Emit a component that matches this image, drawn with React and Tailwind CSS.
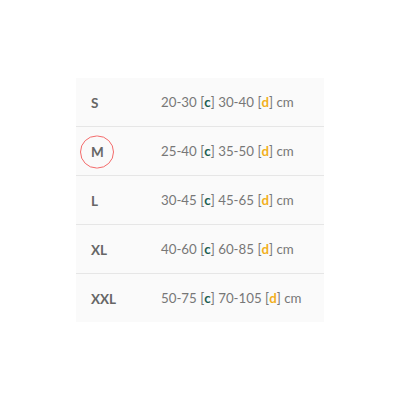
const rows = [
  { size: "S", c: "20-30", d: "30-40" },
  { size: "M", c: "25-40", d: "35-50", marked: true },
  { size: "L", c: "30-45", d: "45-65" },
  { size: "XL", c: "40-60", d: "60-85" },
  { size: "XXL", c: "50-75", d: "70-105" },
];

export default function App() {
  return (
    <div className="flex h-[400px] w-[400px] items-start justify-center bg-white pt-[78px] font-['Lato',sans-serif]">
      <div className="w-[248px] bg-[#fafafa]">
        {rows.map((r, i) => (
          <div
            key={r.size}
            className={`flex items-center pt-[2px] ${i < rows.length - 1 ? "h-[49px] border-b border-[#e6e6e6]" : "h-[48px]"}`}
          >
            <div className="relative w-[85px] pl-[15px] text-[13.5px] font-bold text-[#666]">
              {r.marked && (
                <span className="absolute left-[4px] top-1/2 h-[33px] w-[34px] -translate-y-1/2 rounded-full border-[1.5px] border-[#f46a6a]" />
              )}
              {r.size}
            </div>
            <div className="text-[13.3px] text-[#777]">
              {r.c} [<b className="text-[#1b5e4f]">c</b>] {r.d} [<b className="text-[#f2b01e]">d</b>] cm
            </div>
          </div>
        ))}
      </div>
    </div>
  );
}
